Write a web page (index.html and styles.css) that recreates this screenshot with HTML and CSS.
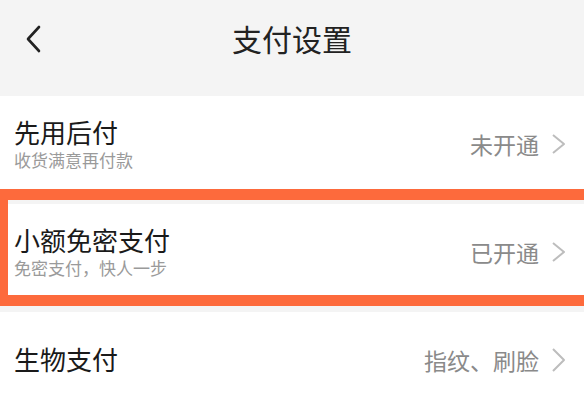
FILE: index.html
```html
<!DOCTYPE html>
<html lang="zh-CN">
  <head>
    <meta charset="UTF-8" />
    <meta name="viewport" content="width=device-width, initial-scale=1.0" />
    <title>支付设置</title>
    <link rel="stylesheet" href="styles.css">
  </head>

  <body>
    <header class="topbar">
      <span class="back">
        <svg width="18" height="28" viewBox="0 0 18 28">
          <path d="M15 2 L4 14 L15 26" fill="none" stroke="#222" stroke-width="2.6" stroke-linecap="round" stroke-linejoin="round" />
        </svg>
      </span>
      <h1>支付设置</h1>
    </header>

    <div class="list">
      <div class="row">
        <div class="info">
          <div class="name">先用后付</div>
          <div class="desc">收货满意再付款</div>
        </div>
        <span class="status">未开通</span>
        <svg class="arrow" width="16" height="22" viewBox="0 0 16 22">
          <path d="M2 2 L13 11 L2 20" fill="none" stroke="#bdbdbd" stroke-width="2" stroke-linejoin="round" />
        </svg>
      </div>
      <div class="row selected">
        <div class="info">
          <div class="name">小额免密支付</div>
          <div class="desc">免密支付，快人一步</div>
        </div>
        <span class="status">已开通</span>
        <svg class="arrow" width="16" height="22" viewBox="0 0 16 22">
          <path d="M2 2 L13 11 L2 20" fill="none" stroke="#bdbdbd" stroke-width="2" stroke-linejoin="round" />
        </svg>
      </div>
      <div class="row">
        <div class="info">
          <div class="name">生物支付</div>
        </div>
        <span class="status">指纹、刷脸</span>
        <svg class="arrow" width="16" height="26" viewBox="0 0 16 26">
          <path d="M2 2 L13 13 L2 24" fill="none" stroke="#bdbdbd" stroke-width="2" stroke-linejoin="round" />
        </svg>
      </div>
    </div>
  </body>
</html>
```

FILE: styles.css
```css
body {
  font-family: "Noto Sans CJK SC", "Noto Sans", sans-serif;
  margin: 0;
  padding: 0;
  background-color: #f4f4f4;
  overflow: hidden;
  height: 404px;
}

.topbar {
  height: 76px;
  display: flex;
  align-items: center;
  justify-content: center;
  position: relative;
}

.back {
  position: absolute;
  left: 24px;
  top: 25px;
  display: flex;
}

h1 {
  margin: 0;
  font-size: 30px;
  font-weight: normal;
  color: #222;
  line-height: 1;
}

.list {
  margin-top: 20px;
  display: flex;
  flex-direction: column;
  gap: 12px;
}

.row {
  position: relative;
  height: 96px;
  background-color: #fff;
  display: flex;
  align-items: center;
  padding: 0 17px 0 14px;
}

.row.selected::after {
  content: "";
  position: absolute;
  top: -15px;
  bottom: -6px;
  left: 0;
  right: -20px;
  border: 11px solid #fd6a3c;
  border-left-width: 8px;
}

.info {
  flex: 1;
  display: flex;
  flex-direction: column;
  margin-top: -2px;
}

.name {
  font-size: 26px;
  line-height: 34px;
  color: #1a1a1a;
}

.desc {
  font-size: 17px;
  line-height: 22px;
  color: #9a9a9a;
}

.status {
  font-size: 23px;
  color: #8a8a8a;
  margin-right: 12px;
}

.arrow {
  display: block;
}
```
